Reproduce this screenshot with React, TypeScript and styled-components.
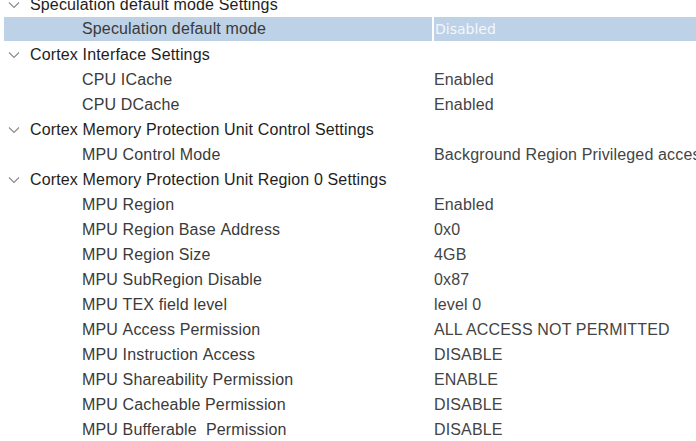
import styled, { createGlobalStyle } from "styled-components";

const GlobalStyle = createGlobalStyle`
  html, body {
    margin: 0;
    padding: 0;
    background: #ffffff;
    overflow: hidden;
  }
`;

const Tree = styled.div`
  width: 696px;
  height: 441px;
  overflow: hidden;
  font-family: "Liberation Sans", Arial, sans-serif;
  font-size: 16px;
  letter-spacing: 0.15px;
  background: #ffffff;
  padding-left: 4px;
  box-sizing: border-box;
`;

const List = styled.div`
  margin-top: -8px;
  display: flex;
  flex-direction: column;
`;

const Row = styled.div<{ $selected?: boolean }>`
  display: grid;
  grid-template-columns: 428px 1fr;
  height: 25px;
  align-items: stretch;
  background: ${(p) => (p.$selected ? "#bdd1e7" : "transparent")};
  border-bottom: ${(p) => (p.$selected ? "1px solid #ffffff" : "none")};
  box-sizing: border-box;
  white-space: nowrap;
`;

const NameCell = styled.div<{ $group?: boolean }>`
  display: flex;
  align-items: center;
  padding-left: ${(p) => (p.$group ? "4px" : "78px")};
  color: ${(p) => (p.$group ? "#1e1e1e" : "#3a3a3a")};
  overflow: hidden;
`;

const ValueCell = styled.div<{ $selected?: boolean }>`
  display: flex;
  align-items: center;
  padding-left: ${(p) => (p.$selected ? "1px" : "0")};
  color: ${(p) => (p.$selected ? "#f4f7fb" : "#444444")};
  border-left: ${(p) => (p.$selected ? "2px solid #ffffff" : "2px solid transparent")};
  font-family: ${(p) =>
    p.$selected ? '"DejaVu Sans", sans-serif' : '"Liberation Sans", Arial, sans-serif'};
  font-size: ${(p) => (p.$selected ? "14px" : "16px")};
  letter-spacing: ${(p) => (p.$selected ? "0" : "0.15px")};
  overflow: hidden;
`;

const Chevron = styled.svg`
  width: 12px;
  height: 8px;
  margin-right: 10px;
  flex: none;
`;

type Item =
  | { kind: "group"; label: string }
  | { kind: "item"; label: string; value: string; selected?: boolean };

const items: Item[] = [
  { kind: "group", label: "Speculation default mode Settings" },
  { kind: "item", label: "Speculation default mode", value: "Disabled", selected: true },
  { kind: "group", label: "Cortex Interface Settings" },
  { kind: "item", label: "CPU ICache", value: "Enabled" },
  { kind: "item", label: "CPU DCache", value: "Enabled" },
  { kind: "group", label: "Cortex Memory Protection Unit Control Settings" },
  { kind: "item", label: "MPU Control Mode", value: "Background Region Privileged accesses only" },
  { kind: "group", label: "Cortex Memory Protection Unit Region 0 Settings" },
  { kind: "item", label: "MPU Region", value: "Enabled" },
  { kind: "item", label: "MPU Region Base Address", value: "0x0" },
  { kind: "item", label: "MPU Region Size", value: "4GB" },
  { kind: "item", label: "MPU SubRegion Disable", value: "0x87" },
  { kind: "item", label: "MPU TEX field level", value: "level 0" },
  { kind: "item", label: "MPU Access Permission", value: "ALL ACCESS NOT PERMITTED" },
  { kind: "item", label: "MPU Instruction Access", value: "DISABLE" },
  { kind: "item", label: "MPU Shareability Permission", value: "ENABLE" },
  { kind: "item", label: "MPU Cacheable Permission", value: "DISABLE" },
  { kind: "item", label: "MPU Bufferable  Permission", value: "DISABLE" },
];

function ExpandIcon() {
  return (
    <Chevron viewBox="0 0 12 8">
      <path d="M1 1.5 L6 6.5 L11 1.5" fill="none" stroke="#8a8a8a" strokeWidth="1.1" />
    </Chevron>
  );
}

export default function App() {
  return (
    <>
      <GlobalStyle />
      <Tree>
        <List>
          {items.map((it, i) =>
            it.kind === "group" ? (
              <Row key={i}>
                <NameCell $group>
                  <ExpandIcon />
                  {it.label}
                </NameCell>
                <div />
              </Row>
            ) : (
              <Row key={i} $selected={it.selected}>
                <NameCell>{it.label.replace(/ /g, "\u00a0")}</NameCell>
                <ValueCell $selected={it.selected}>{it.value}</ValueCell>
              </Row>
            )
          )}
        </List>
      </Tree>
    </>
  );
}
